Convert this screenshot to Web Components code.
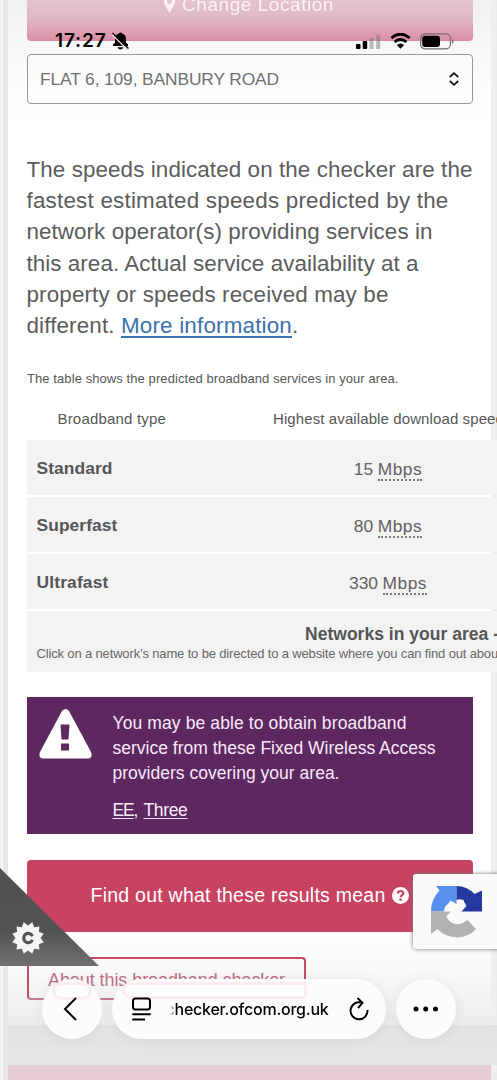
<!DOCTYPE html>
<html lang="en">
<head>
<meta charset="utf-8">
<title>Broadband checker</title>
<style>
html,body{margin:0;padding:0;width:497px;height:1080px;overflow:hidden}
body{font-family:"Liberation Sans",Arial,sans-serif;color:#575757;background:#e9e9e9}
</style>
</head>
<body>
<checker-app></checker-app>
<script>
function define(name, html, ready){
  const t=document.createElement('template');
  t.innerHTML=html;
  customElements.define(name, class extends HTMLElement{
    constructor(){super();this.attachShadow({mode:'open'}).append(t.content.cloneNode(true));}
    connectedCallback(){if(ready)ready(this);}
  });
}

/* One line of text, tracked so that it fills the width in its "w" attribute. */
define('fit-line', `<style>:host{display:block;white-space:nowrap}span{white-space:pre}</style><span><slot></slot></span>`, el=>{
  const s=el.shadowRoot.querySelector('span');
  s.style.letterSpacing='0px';
  const w=s.getBoundingClientRect().width, n=el.textContent.length;
  if(w&&n>1)s.style.letterSpacing=((el.getAttribute('w')-w)/n)+'px';
});

define('location-button', `<style>
:host{display:flex;height:41px;box-sizing:border-box;border-radius:0 0 4px 4px;background:linear-gradient(#e4c4ce,#e0b8c5 45%,#dc92a9 95%,#d688a0);color:#fff;font-size:19px;line-height:20px;justify-content:center;overflow:hidden}
.r{display:flex;gap:7px;margin-top:-5px;margin-left:-2px;height:20px;opacity:.82}
svg{margin-top:1px}
</style><div class="r"><svg width="11" height="17" viewBox="0 0 11 17"><path fill="#fff" fill-rule="evenodd" d="M5.500 17L1 9Q0 7 0 5.500a5.500 5.500 0 0 1 11 0Q11 7 10 9ZM5.500 3a2.500 2.500 0 1 0 0 5a2.500 2.500 0 1 0 0-5Z"/></svg><fit-line w="152">Change Location</fit-line></div>`);

define('address-select', `<style>
:host{display:flex;align-items:center;justify-content:space-between;box-sizing:border-box;height:50px;margin-top:13px;border:1px solid #999;border-radius:4px;padding:0 13px 0 12px;background:linear-gradient(#fafafa,#fff);font-size:17.400px;color:#707070}
</style><fit-line w="239">FLAT 6, 109, BANBURY ROAD</fit-line><svg width="10" height="14" viewBox="0 0 10 14"><path d="M.8 5L5 1.200 9.200 5M.8 9L5 12.800 9.200 9" fill="none" stroke="#111" stroke-width="1.700"/></svg>`);

define('speed-note', `<style>
:host{display:block;margin:50px 0 0 -.5px;font-size:22.400px;line-height:31.200px;color:#5c5c5c}
.l{display:flex}a{color:#3a72ad;text-decoration:underline;text-decoration-thickness:1.500px;text-underline-offset:3px}
</style>
<fit-line w="446">The speeds indicated on the checker are the</fit-line>
<fit-line w="422">fastest estimated speeds predicted by the</fit-line>
<fit-line w="406">network operator(s) providing services in</fit-line>
<fit-line w="392">this area. Actual service availability at a</fit-line>
<fit-line w="362">property or speeds received may be</fit-line>
<div class="l"><fit-line w="94.5">different. </fit-line><a><fit-line w="171">More information</fit-line></a><span>.</span></div>`);

define('speed-row', `<style>
:host{display:grid;grid-template-columns:246px 230px;height:55px;align-items:center;background:#f3f3f3;margin-bottom:2px;font-size:17.400px;color:#626262}
.n{padding:2px 0 0 9.500px;font-weight:bold;color:#565656}.v{display:flex;justify-content:center;gap:4.500px}
.u{border-bottom:2px dotted #777;line-height:20px;margin-top:4px}.q{line-height:20px;margin-top:4px}
</style><div class="n"><slot></slot></div><div class="v"><span class="q"><slot name="speed"></slot></span><fit-line class="u" w="44.5">Mbps</fit-line></div>`);

define('speed-table', `<style>
:host{display:block;width:476px;margin-top:28.500px}
.cap{font-size:13px;line-height:18px}
.head{display:grid;grid-template-columns:246px 230px;font-size:15px;line-height:20px;margin:21.500px 0 11px}
.head :first-child{padding-left:30.500px}
.net{height:61px;background:#f3f3f3;box-sizing:border-box;padding:12.500px 0 0 9.500px}
.t{font-size:17.500px;line-height:20px;font-weight:bold;padding-left:268.500px;color:#565656}
.s{font-size:13px;line-height:18px;margin-top:1px;color:#676767}
</style>
<fit-line class="cap" w="371.5">The table shows the predicted broadband services in your area.</fit-line>
<div class="head"><fit-line w="108.5">Broadband type</fit-line><fit-line w="231">Highest available download speed</fit-line></div>
<speed-row><fit-line w="76">Standard</fit-line><span slot="speed">15</span></speed-row>
<speed-row><fit-line w="81">Superfast</fit-line><span slot="speed">80</span></speed-row>
<speed-row><fit-line w="72">Ultrafast</fit-line><span slot="speed">330</span></speed-row>
<div class="net"><fit-line class="t" w="194">Networks in your area -</fit-line>
<fit-line class="s" w="465">Click on a network’s name to be directed to a website where you can find out about</fit-line></div>`);

define('wireless-notice', `<style>
:host{display:flex;gap:19.500px;box-sizing:border-box;height:137px;margin-top:25px;padding:12px;background:#5c285f;color:#fbe9fb;font-size:17.500px;line-height:25px}
.x{padding-top:1.500px}
p{display:flex;margin:12.500px 0 0}u{text-underline-offset:2px}
</style><svg width="54" height="51" viewBox="0 0 54 51"><path fill="#fff" d="M23 2Q26.500-2 30 2L52 43Q54 49 49 49.500H4Q-1 49 1 43Z"/><path fill="#5c285f" d="M21.500 15.500h9l-1 15h-7zM22 34.500h8v7h-8z"/></svg>
<div class="x"><fit-line w="294">You may be able to obtain broadband</fit-line><fit-line w="323">service from these Fixed Wireless Access</fit-line><fit-line w="227">providers covering your area.</fit-line>
<p><u><fit-line w="21">EE</fit-line></u><fit-line w="10">, </fit-line><u><fit-line w="44">Three</fit-line></u></p></div>`);

define('results-button', `<style>
:host{display:flex;align-items:center;box-sizing:border-box;height:72px;margin-top:25.500px;padding-left:63.500px;gap:6.500px;background:#c84261;border-radius:4px;color:#fff;font-size:19.500px}
</style><fit-line w="295">Find out what these results mean</fit-line><svg width="17" height="17" viewBox="0 0 17 17"><circle cx="8.500" cy="8.500" r="8.500" fill="#fff"/><path d="M5.700 6.500Q6 4 8.500 4t2.800 2.200c0 1.900-2.600 1.900-2.700 4" fill="none" stroke="#c84261" stroke-width="2.200"/><path fill="#c84261" d="M7.400 11.500h2.400v2.300H7.400z"/></svg>`);

define('about-button', `<style>
:host{display:block;box-sizing:border-box;width:279px;height:43px;margin-top:25.500px;border:2px solid #c84a68;border-bottom-color:#c67b90;border-radius:4px;padding:8.500px 0 0 19px;font-size:18px;line-height:24px;color:#bd7086}
</style><fit-line w="237">About this broadband checker</fit-line>`);

define('status-bar', `<style>
:host{position:absolute;left:55px;right:43px;top:31px;height:20px;display:flex;align-items:center;justify-content:space-between;color:#000;font:600 19px/20px Inter,sans-serif}
div{display:flex;align-items:center}.a{gap:5px}.b{gap:9px}
</style><div class="a"><fit-line w="51.5">17:27</fit-line><svg width="17" height="18" viewBox="0 0 17 18"><path d="M1 14V12.500l2-2V7Q3 3 6.500 1.700 8.500-.7 10.500 1.700 14 3 14 7v3.500l2 2V14ZM5.500 15.300h6q-1 2.200-3 2.200t-3-2.200" fill="#000"/><path d="M0 2.500L15.500 17.500" stroke="#ecd0d8" stroke-width="1.500"/><path d="M.5 1L16.500 16.500" stroke="#000" stroke-width="1.300"/></svg></div>
<div class="b"><svg width="25" height="16" viewBox="0 0 25 16"><rect y="11" width="4.500" height="5" rx="1"/><rect x="6.700" y="8" width="4.500" height="8" rx="1"/><path d="M13.500 5h4v11h-4zM20.200 1.500h4V16h-4z" fill="#777" opacity=".5"/></svg>
<svg width="21" height="16" viewBox="0 0 21 16"><path d="M1.300 5Q10.500-2.700 19.700 5M4.500 9Q10.500 3.800 16.500 9" fill="none" stroke="#000" stroke-width="2.900"/><path d="M6.800 12q3.700-3 7.400 0l-3.700 3.700Z"/></svg>
<svg width="34" height="17" viewBox="0 0 34 17"><rect x=".6" y=".9" width="29.800" height="15" rx="4.700" fill="none" stroke="#756b70" stroke-width="1.200"/><rect x="2.200" y="2.700" width="17.800" height="11.400" rx="3"/><path d="M32 6q3 2.400 0 5Z" fill="#756b70"/></svg></div>`);

define('cookie-corner', `<style>:host{position:absolute;left:0;top:868px;width:99px;height:98px}svg{display:block}</style>
<svg width="99" height="98" viewBox="0 0 99 98"><defs><linearGradient id="g" x2="0" y2="1"><stop stop-color="#505050"/><stop offset=".65" stop-color="#535353"/><stop offset="1" stop-color="#707070"/></linearGradient></defs><path fill="url(#g)" d="M0 0L99 98H0Z"/><path class="s" fill="#f5f5f5"/><path d="M32.400 68.300A4.500 4.700 0 1 0 32.400 71.700" fill="none" stroke="#555" stroke-width="3.200"/></svg>`, el=>{
  let d='';
  for(let i=0;i<24;i++){const a=(i+1)*Math.PI/12,r=i%2?12.5:16.3;d+=(i?'L':'M')+(28+r*Math.sin(a)).toFixed(2)+' '+(70-r*Math.cos(a)).toFixed(2);}
  el.shadowRoot.querySelector('.s').setAttribute('d',d+'Z');
});

define('captcha-badge', `<style>:host{position:absolute;left:413px;top:874px;width:90px;height:75px;box-sizing:border-box;padding:12px 0 0 18px;background:#fafafa;border-radius:3px 0 0 3px;box-shadow:0 0 4px #777}</style>
<svg width="52" height="52" viewBox="0 0 52 52"><path fill="#5790ec" d="M5 0H25.500V18L19.500 14.500 17 18Q13 20 13 25.500H0Q0 13 8.500 4.500Z"/><path fill="#2738a1" d="M25.500 0Q36 0 43.500 8L51 4.500V25.500H30.500L35.500 20 32.500 14.500 25.500 17Z"/><path fill="#b2b2b2" d="M0 25.500H20L15.500 30Q17 36 24 38 31 39 36.500 34L45 43Q38 51 26 51.500 14 51 6.500 43L0 48Z"/><path fill="#fafafa" d="M25.500 14Q29 12.500 33 14.500L31 18 25.500 17Z"/></svg>`);

define('browser-bar', `<style>
:host{position:absolute;left:42px;top:979px;width:413.500px;height:60px;display:flex;gap:9.500px;color:#000}
.c,.m{box-sizing:border-box;height:60px;border-radius:30px;background:#fcfcfc;box-shadow:0 1px 14px rgba(0,0,0,.07);display:flex;align-items:center;position:relative;overflow:hidden}
:host>.c{width:60px;justify-content:center}.m{width:274.500px;padding:0 17px 0 20px}
.g{position:absolute;border:3px solid #fcecf0;border-radius:18px;box-sizing:border-box;filter:blur(.7px)}
.l{left:10px;top:3px;width:40px;height:18px}.w{left:10px;right:79px;top:3px;height:17px;border-radius:10px 3px 3px 12px}
.m>svg{position:relative;flex:none}
.url{position:relative;width:162px;margin-left:16px;flex:none;display:flex;justify-content:flex-end;overflow:hidden;font:500 16px/24px Inter,sans-serif;-webkit-mask-image:linear-gradient(90deg,transparent,transparent 3px,#000 9px);mask-image:linear-gradient(90deg,transparent,transparent 3px,#000 9px)}
.re{margin-left:auto}
</style>
<div class="c"><i class="g l"></i><svg style="position:relative;left:-2px" width="14" height="24" viewBox="0 0 14 24"><path d="M13 1L2 12L13 23" fill="none" stroke="#000" stroke-width="2"/></svg></div>
<div class="m"><i class="g w"></i><svg width="19" height="24" viewBox="0 0 19 24"><rect x="1" y="1.500" width="17" height="11" rx="2.500" fill="none" stroke="#000" stroke-width="2"/><path d="M.3 17.200h18.400M.3 22.500H13" stroke="#000" stroke-width="2"/></svg>
<div class="url"><fit-line w="163">checker.ofcom.org.uk</fit-line></div>
<svg class="re" width="20" height="24" viewBox="0 0 20 24"><path d="M18.500 12.800A8.500 8.500 0 1 1 12.800 5.700M8.500 1L13.500 5.900 9 11" fill="none" stroke="#000" stroke-width="1.900"/></svg></div>
<div class="c"><svg width="26" height="6" viewBox="0 0 26 6"><circle cx="3" cy="3" r="2.500"/><circle cx="12.700" cy="3" r="2.500"/><circle cx="22.500" cy="3" r="2.500"/></svg></div>`);

define('checker-app', `<style>
:host{display:block;position:relative;width:497px;height:1080px;overflow:hidden;background:linear-gradient(90deg,#eee 0 1px,#f6f6f6 1px 3px,#e8e8e8 3px 8px,#e8e8e8 490px,#eee 491px)}
main{box-sizing:border-box;width:483px;height:1025px;margin-left:8px;padding:0 18px 0 19px;background:linear-gradient(#f1f1f1 0,#fafafa 65px,#fff 120px,#fff 925px,#fafafa 965px,#ececec 1025px)}
.space{height:40px;background:linear-gradient(#e3e3e3,#e6e6e6);margin-left:8px}
footer{height:15px;margin:0 6px 0 8px;background:#e6ccd5}
</style>
<main><location-button></location-button><address-select></address-select><speed-note></speed-note><speed-table></speed-table><wireless-notice></wireless-notice><results-button></results-button><about-button></about-button></main>
<div class="space"></div><footer></footer>
<status-bar></status-bar><cookie-corner></cookie-corner><captcha-badge></captcha-badge><browser-bar></browser-bar>`);
</script>
</body>
</html>
